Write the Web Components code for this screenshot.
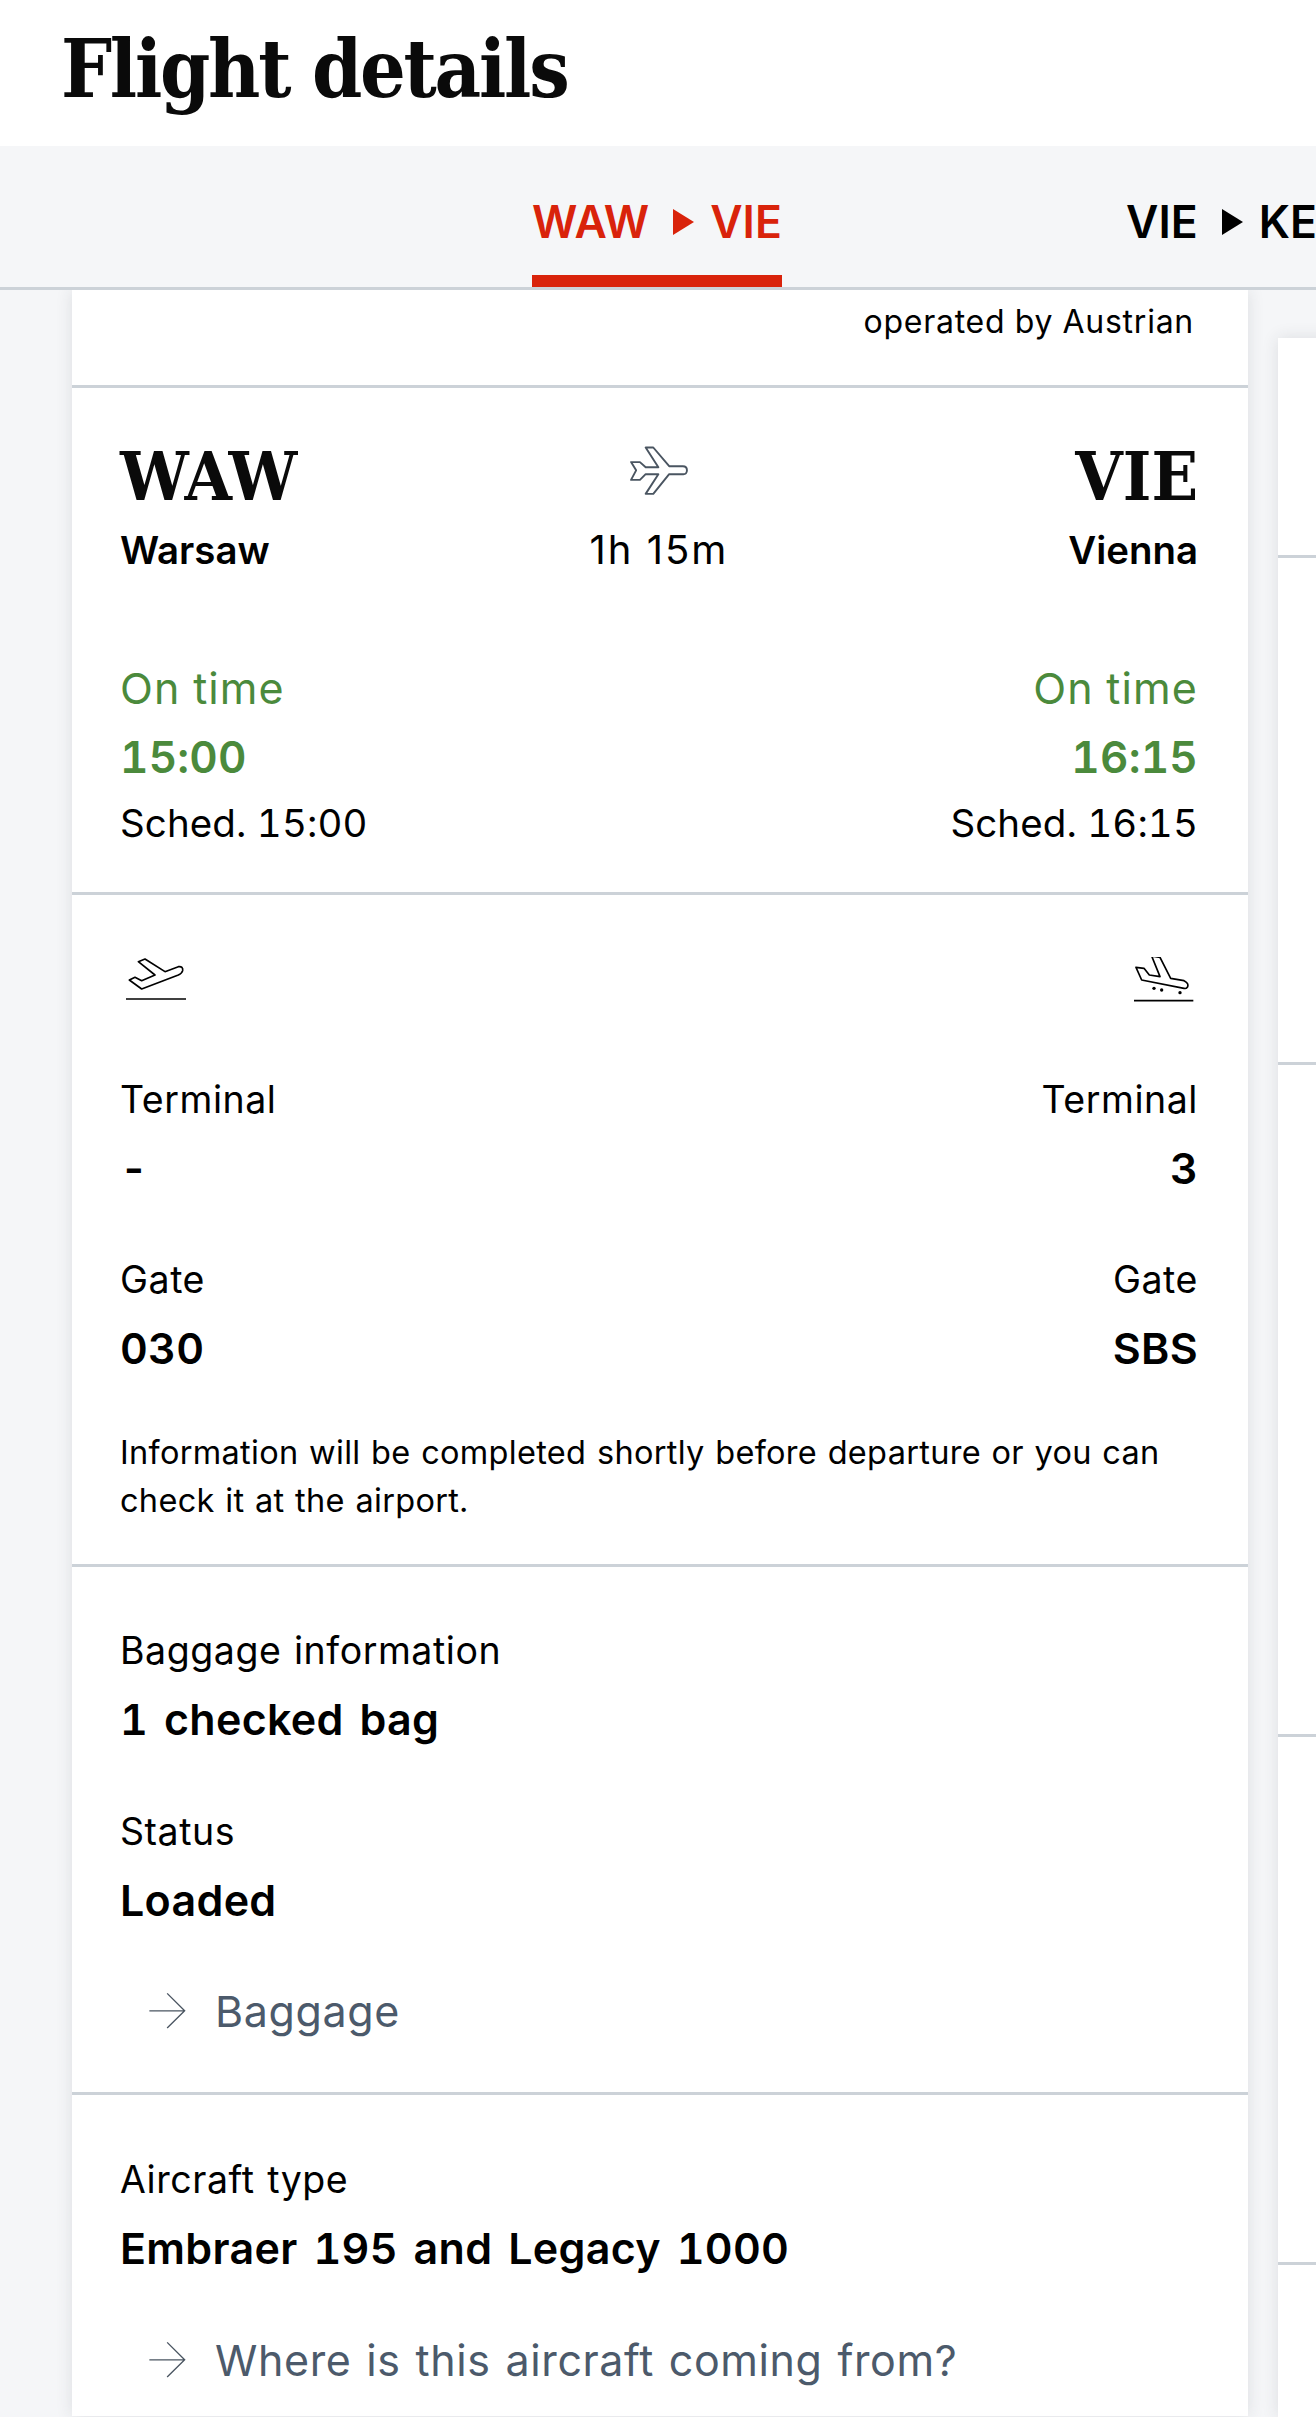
<!DOCTYPE html>
<html><head><meta charset="utf-8"><style>
html,body{margin:0;padding:0;background:#f5f6f8;}
body{width:1316px;height:2417px;overflow:hidden;font-family:"Inter","Liberation Sans",sans-serif;color:#000;font-variant-numeric:tabular-nums;}
</style></head><body>
<flight-header>Flight details</flight-header>
<flight-tabs>
  <flight-tab active from="WAW" to="VIE"></flight-tab>
  <flight-tab from="VIE" to="KEF"></flight-tab>
</flight-tabs>
<flight-stage>
  <flight-card>
    <card-section kind="top"><div style="text-align:right;font-size:32px;line-height:64px;padding-right:4px;letter-spacing:.75px">operated by Austrian</div></card-section>
    <card-section kind="route">
      <route-row>
        <div slot="a"><air-code>WAW</air-code><air-city>Warsaw</air-city></div>
        <div slot="b"><plane-icon></plane-icon><air-dur>1h 15m</air-dur></div>
        <div slot="c"><air-code>VIE</air-code><air-city>Vienna</air-city></div>
      </route-row>
      <two-col style="margin-top:77px">
        <div slot="l"><time-cell status="On time" time="15:00" sched="Sched. 15:00"></time-cell></div>
        <div slot="r"><time-cell status="On time" time="16:15" sched="Sched. 16:15"></time-cell></div>
      </two-col>
    </card-section>
    <card-section kind="info">
      <two-col>
        <div slot="l"><dep-icon kind="dep"></dep-icon></div>
        <div slot="r"><dep-icon kind="arr"></dep-icon></div>
      </two-col>
      <two-col style="margin-top:62px">
        <info-field slot="l" label="Terminal" value="-"></info-field>
        <info-field slot="r" label="Terminal" value="3"></info-field>
      </two-col>
      <two-col style="margin-top:43px">
        <info-field slot="l" label="Gate" value="030"></info-field>
        <info-field slot="r" label="Gate" value="SBS"></info-field>
      </two-col>
      <note-text>Information will be completed shortly before departure or you can check it at the airport.</note-text>
    </card-section>
    <card-section kind="bag">
      <info-field label="Baggage information" value="1 checked bag"></info-field>
      <info-field style="margin-top:44px" label="Status" value="Loaded"></info-field>
      <arrow-link style="margin-top:42px">Baggage</arrow-link>
    </card-section>
    <card-section kind="last">
      <info-field label="Aircraft type" value="Embraer 195 and Legacy 1000"></info-field>
      <arrow-link>Where is this aircraft coming from?</arrow-link>
    </card-section>
  </flight-card>
  <flight-card side>
    <card-section style="height:220px"></card-section>
    <card-section style="height:507px"></card-section>
    <card-section style="height:672px"></card-section>
    <card-section style="height:528px"></card-section>
    <card-section style="height:152px;border:0"></card-section>
  </flight-card>
</flight-stage>
<script>
function def(name, css, html){
  customElements.define(name, class extends HTMLElement{
    connectedCallback(){
      if(this.shadowRoot) return;
      const r=this.attachShadow({mode:'open'});
      const g=k=>{const v=this.getAttribute(k);return v===null?'':v};
      r.innerHTML='<style>'+css+'</style>'+(typeof html==='function'?html(g,this):html);
    }
  });
}
const SERIF='"DejaVu Serif Condensed","DejaVu Serif",serif';
def('flight-header',':host{display:block;background:#fff;height:146px;box-sizing:border-box;padding:0 0 0 61px;font:700 80px/138px '+SERIF+';color:#0a0a0a;letter-spacing:-2.25px}','<slot></slot>');
def('flight-tabs',':host{display:flex;gap:344px;height:144px;box-sizing:border-box;padding-left:532px;background:#f5f6f8;border-bottom:3px solid #ccd2d8;overflow:hidden;position:relative;z-index:2}','<slot></slot>');
def('flight-tab',`:host{display:flex;align-items:center;flex:none;box-sizing:border-box;height:141px;width:250px;padding:23px 0 0 0;font:600 44.5px/1 "Inter","Liberation Sans",sans-serif;white-space:nowrap;color:#000;border-bottom:12px solid transparent}
:host([active]){color:#d9230b;border-bottom-color:#d9230b}
svg{width:21px;height:26px;margin:0 16px 0 24px;flex:none;fill:currentColor}`,
g=>g('from')+'<svg viewBox="0 0 21 26"><path d="M0 0L21 13L0 26Z"/></svg>'+g('to'));
def('flight-stage',':host{display:flex;gap:30px;padding-left:72px;align-items:flex-start;height:2127px;overflow:hidden}','<slot></slot>');
def('flight-card',`:host{display:block;flex:none;width:1176px;background:#fff;box-shadow:0 0 16px rgba(40,50,60,.12)}
:host([side]){margin-top:48px}`,'<slot></slot>');
def('card-section',`:host{display:block;box-sizing:border-box;padding:0 50px 0 48px;border-bottom:3px solid #ccd2d8}
:host([kind=top]){height:98px}
:host([kind=route]){height:507px;padding-top:51px}
:host([kind=info]){height:672px;padding-top:62px}
:host([kind=bag]){height:528px;padding-top:50px}
:host([kind=last]){height:321px;padding-top:51px;border-bottom:0}`,'<slot></slot>');
def('route-row',`:host{display:grid;grid-template-columns:1fr auto 1fr;align-items:start}
::slotted([slot=b]){text-align:center}
::slotted([slot=c]){text-align:right}`,'<slot name="a"></slot><slot name="b"></slot><slot name="c"></slot>');
def('air-code',':host{display:block;font:700 68px/74px '+SERIF+';color:#0a0a0a}','<slot></slot>');
def('air-city',':host{display:block;margin-top:9px;font:600 38.4px/56px "Inter","Liberation Sans",sans-serif}','<slot></slot>');
def('air-dur',':host{display:block;margin-top:9px;font:400 40px/56px "Inter","Liberation Sans",sans-serif;letter-spacing:2px}','<slot></slot>');
def('plane-icon',':host{display:block;height:74px}svg{display:block;margin:0 auto;width:64px;height:54px;padding-top:5px;fill:none;stroke:#4a5561;stroke-width:6;stroke-linejoin:round}',
'<svg viewBox="140 65 200 170"><path d="M198 76H222L272 135H315Q328 135 328 148T315 160H272L222 222H198L238 160H198L180 178H152L168 148L152 122H180L198 138H238Z"/></svg>');
def('two-col',':host{display:flex;justify-content:space-between;align-items:flex-start}::slotted([slot=r]){text-align:right}','<slot name="l"></slot><slot name="r"></slot>');
def('time-cell',`:host{display:block;font-size:38.5px;line-height:67px;letter-spacing:.1px}
.s{color:#4b8a3c;font-size:43px;letter-spacing:1.1px}.t{color:#4b8a3c;font-weight:600;font-size:44px;letter-spacing:.2px;line-height:69px;padding-top:1px;margin-bottom:-2px}`,
g=>`<div class="s">${g('status')}</div><div class="t">${g('time')}</div><div>${g('sched')}</div>`);
def('dep-icon',':host{display:block}svg{display:block;width:67px;height:47px;fill:none;stroke:#000;stroke-linejoin:round}',(g)=>g('kind')==='dep'?
'<svg viewBox="60 81 201 141"><path stroke-width="5" d="M88 150L105 142L125 152L165 135L115 95L135 87L195 125L235 110Q250 108 248 122Q246 130 235 135L125 177Z"/><path stroke-width="5" d="M78 207H258"/></svg>':
'<svg viewBox="63 81 201 141"><path stroke-width="5" d="M78 112L102 115L118 135L150 140L125 78L150 82L182 145L222 152Q238 160 232 172Q228 177 222 175L95 150Z"/><circle cx="132" cy="175" r="5" fill="#000" stroke="none"/><circle cx="155" cy="180" r="5" fill="#000" stroke="none"/><circle cx="210" cy="188" r="5" fill="#000" stroke="none"/><path stroke-width="5" d="M72 212H250"/></svg>');
def('info-field',`:host{display:block;font-size:37.5px;line-height:68px;letter-spacing:.55px;word-spacing:2px}
.v{font-weight:600;font-size:43px;word-spacing:4px;letter-spacing:.3px;line-height:69px}`,g=>`<div>${g('label')}</div><div class="v">${g('value')}</div>`);
def('note-text',':host{display:block;margin-top:46px;font-size:32.5px;line-height:48px;letter-spacing:.3px;word-spacing:1.6px}','<slot></slot>');
def('arrow-link',`:host{display:flex;align-items:center;margin-top:43px;padding-left:26px;height:68px;gap:27px;font-size:43px;color:#4c5a6b;letter-spacing:.6px;word-spacing:2.8px}
svg{width:42px;height:42px;flex:none;fill:none;stroke:#4a5561;stroke-width:4}`,
'<svg viewBox="140 30 125 125"><path d="M150 92H255M203 40L255 92L203 143"/></svg><slot></slot>');
</script>
</body></html>
